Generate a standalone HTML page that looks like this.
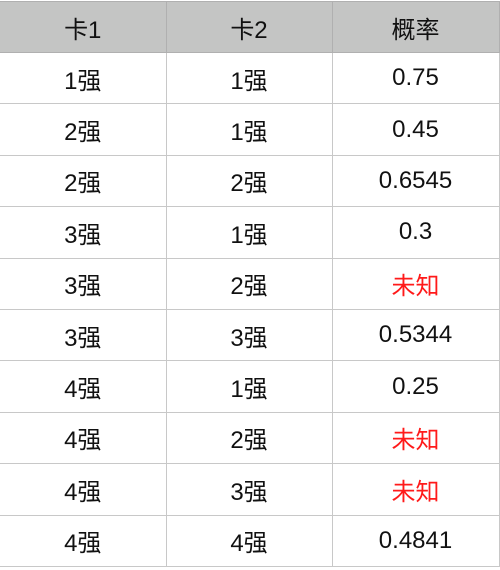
<!DOCTYPE html>
<html><head><meta charset="utf-8"><style>
body{margin:0;width:500px;height:570px;background:#fff;overflow:hidden;font-family:"Liberation Sans","Noto Sans CJK SC",sans-serif;}
table{position:absolute;left:0;top:1px;border-collapse:collapse;width:499px;table-layout:fixed}
td,th{border:1px solid #c8c8c8;text-align:center;font-size:24px;font-weight:normal;color:#111;padding:0;height:50.4px;}
th{background:#c4c5c4;height:50px;border-bottom:1px solid #999;border-color:#b0b0b0}
td:first-child,th:first-child{border-left:none}
.r{color:#ff1a1a}
</style></head><body>
<table>
<colgroup><col style="width:166px"><col style="width:166px"><col style="width:167px"></colgroup>
<tr><th>卡1</th><th>卡2</th><th>概率</th></tr>
<tr><td>1强</td><td>1强</td><td>0.75</td></tr>
<tr><td>2强</td><td>1强</td><td>0.45</td></tr>
<tr><td>2强</td><td>2强</td><td>0.6545</td></tr>
<tr><td>3强</td><td>1强</td><td>0.3</td></tr>
<tr><td>3强</td><td>2强</td><td class="r">未知</td></tr>
<tr><td>3强</td><td>3强</td><td>0.5344</td></tr>
<tr><td>4强</td><td>1强</td><td>0.25</td></tr>
<tr><td>4强</td><td>2强</td><td class="r">未知</td></tr>
<tr><td>4强</td><td>3强</td><td class="r">未知</td></tr>
<tr><td>4强</td><td>4强</td><td>0.4841</td></tr>
</table>
</body></html>
